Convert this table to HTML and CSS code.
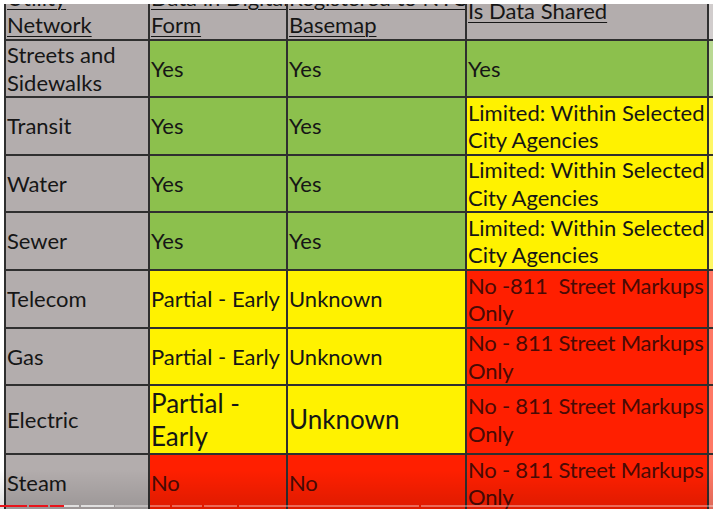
FILE: index.html
```html
<!DOCTYPE html>
<html lang="en">
<head>
<meta charset="utf-8">
<title>Utility Network Data</title>
<link rel="stylesheet" href="styles.css">
</head>
<body>
<div class="screen">
  <div class="frame">
    <table class="grid">
      <colgroup>
        <col class="c1"><col class="c2"><col class="c3"><col class="c4"><col class="c5">
      </colgroup>
      <tr class="r-head">
        <td class="gray head">Utility<br>Network</td>
        <td class="gray head">Data in Digital<br>Form</td>
        <td class="gray head">Registered to NYC<br>Basemap</td>
        <td class="gray head">Is Data Shared</td>
        <td class="gray edge"></td>
      </tr>
      <tr class="r57">
        <td class="gray">Streets and<br>Sidewalks</td>
        <td class="green">Yes</td>
        <td class="green">Yes</td>
        <td class="green">Yes</td>
        <td class="green edge"></td>
      </tr>
      <tr class="r58">
        <td class="gray">Transit</td>
        <td class="green">Yes</td>
        <td class="green">Yes</td>
        <td class="yellow">Limited: Within Selected<br>City Agencies</td>
        <td class="yellow edge"></td>
      </tr>
      <tr class="r57">
        <td class="gray">Water</td>
        <td class="green">Yes</td>
        <td class="green">Yes</td>
        <td class="yellow">Limited: Within Selected<br>City Agencies</td>
        <td class="yellow edge"></td>
      </tr>
      <tr class="r58">
        <td class="gray">Sewer</td>
        <td class="green">Yes</td>
        <td class="green">Yes</td>
        <td class="yellow">Limited: Within Selected<br>City Agencies</td>
        <td class="yellow edge"></td>
      </tr>
      <tr class="r58">
        <td class="gray">Telecom</td>
        <td class="yellow">Partial - Early</td>
        <td class="yellow">Unknown</td>
        <td class="red">No -811&nbsp; Street Markups<br>Only</td>
        <td class="red edge"></td>
      </tr>
      <tr class="r57">
        <td class="gray">Gas</td>
        <td class="yellow">Partial - Early</td>
        <td class="yellow">Unknown</td>
        <td class="red">No - 811 Street Markups<br>Only</td>
        <td class="red edge"></td>
      </tr>
      <tr class="r69">
        <td class="gray">Electric</td>
        <td class="yellow big">Partial -<br>Early</td>
        <td class="yellow big">Unknown</td>
        <td class="red">No - 811 Street Markups<br>Only</td>
        <td class="red edge"></td>
      </tr>
      <tr class="r58">
        <td class="gray">Steam</td>
        <td class="red">No</td>
        <td class="red">No</td>
        <td class="red">No - 811 Street Markups<br>Only</td>
        <td class="red edge"></td>
      </tr>
    </table>
  </div>
  <div class="shade"></div>
  <div class="progress">
    <span class="seg played s1"></span>
    <span class="seg played s2"></span>
    <span class="seg played s3"></span>
    <span class="seg buf s4"></span>
    <span class="seg buf s5"></span>
    <span class="seg rest s6"></span>
    <span class="seg rest s7"></span>
    <span class="seg rest s8"></span>
    <span class="seg rest s9"></span>
    <span class="seg rest s10"></span>
    <span class="seg rest s11"></span>
  </div>
</div>
</body>
</html>
```

FILE: styles.css
```css
html, body {
  margin: 0;
  padding: 0;
  background: #ffffff;
}

.screen {
  position: relative;
  width: 713px;
  height: 509px;
  overflow: hidden;
}

.frame {
  margin: 4px 0 0 4px;
  width: 709px;
  height: 505px;
  overflow: hidden;
}

.grid {
  margin-top: -23px;
  border-collapse: collapse;
  table-layout: fixed;
  width: 709px;
  font-family: "Lato", "Open Sans", sans-serif;
  font-size: 22px;
  line-height: 27.5px;
  color: #161616;
}

.c1 { width: 144px; }
.c2 { width: 138px; }
.c3 { width: 179px; }
.c4 { width: 242px; }
.c5 { width: 6px; }

.grid td {
  border: 2px solid #2f2f2f;
  padding: 0 0 0 1px;
  vertical-align: middle;
  text-align: left;
  white-space: nowrap;
  overflow: hidden;
}

.grid td.edge {
  border-right: none;
  opacity: 0.6;
}

.r-head { height: 58px; }
.r57 { height: 57px; }
.r58 { height: 58px; }
.r69 { height: 69px; }

.head {
  text-decoration: underline;
  text-decoration-thickness: 1px;
  text-underline-offset: 3px;
}

.gray { background: #b3adad; }
.green { background: #8cc04d; }
.yellow { background: #fff200; }
.red {
  background: #ff1f00;
  color: #4a0a05;
  letter-spacing: -0.2px;
}

.big {
  font-size: 26px;
  line-height: 33px;
}

.shade {
  position: absolute;
  left: 0;
  right: 0;
  bottom: 0;
  height: 40px;
  background: linear-gradient(to bottom, rgba(0,0,0,0), rgba(0,0,0,0.13));
  pointer-events: none;
}

.progress {
  position: absolute;
  left: 0;
  right: 0;
  bottom: 2px;
  height: 2px;
}

.seg {
  position: absolute;
  top: 0;
  height: 2px;
}

.played { background: #e8141b; }
.buf { background: rgba(235, 235, 235, 0.85); }
.rest { background: rgba(255, 255, 255, 0.35); }

.s1 { left: 0; width: 27px; }
.s2 { left: 29px; width: 19px; }
.s3 { left: 50px; width: 14px; }
.s4 { left: 64px; width: 15px; }
.s5 { left: 81px; width: 33px; }
.s6 { left: 115px; width: 33px; }
.s7 { left: 150px; width: 20px; }
.s8 { left: 172px; width: 30px; }
.s9 { left: 204px; width: 33px; }
.s10 { left: 239px; width: 180px; }
.s11 { left: 421px; width: 292px; }
```
